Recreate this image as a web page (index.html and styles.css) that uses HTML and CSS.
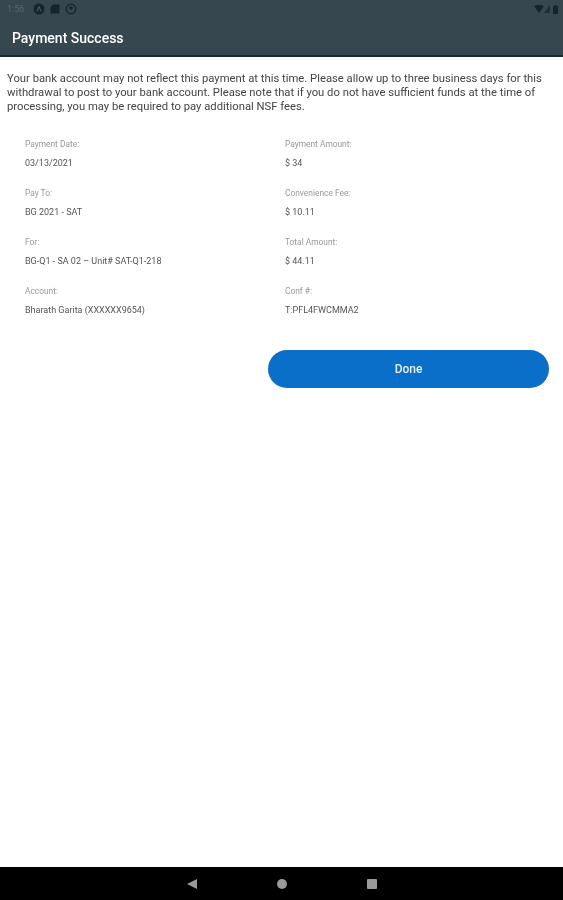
FILE: index.html
```html
<!DOCTYPE html>
<html lang="en">
<head>
    <meta charset="UTF-8">
    <meta name="viewport" content="width=device-width, initial-scale=1.0">
    <title>Payment Success</title>
    <link rel="stylesheet" href="styles.css">
</head>
<body>
    <div class="screen">
        <header class="app-header">
            <div class="status-bar">
                <div class="status-left">
                    <span class="clock">1:56</span>
                    <svg class="status-icon" viewBox="0 0 12 12"><circle cx="6" cy="6" r="5.5" fill="#16242c"/><path d="M4 8.5 6 3.5l2 5" fill="none" stroke="#4d5f68" stroke-width="1"/></svg>
                    <svg class="status-icon" viewBox="0 0 12 12"><path d="M1.500 4 4 1.500h6.500v9h-9z" fill="#16242c"/></svg>
                    <svg class="status-icon" viewBox="0 0 12 12"><circle cx="6" cy="6" r="4.800" fill="none" stroke="#16242c" stroke-width="1.300"/><circle cx="6" cy="5" r="1.800" fill="#16242c"/></svg>
                </div>
                <div class="status-right">
                    <svg class="wifi" viewBox="0 0 10 8"><path d="M0 1.200Q5-1.200 10 1.200L5 8z" fill="#16242c"/></svg>
                    <svg class="signal" viewBox="0 0 6 8"><path d="M6 0v8H0z" fill="#16242c" opacity=".7"/></svg>
                    <svg class="battery" viewBox="0 0 5 9"><path d="M1.500 0h2v1H5v8H0V1h1.500z" fill="#16242c"/></svg>
                </div>
            </div>
            <h1 class="page-title">Payment Success</h1>
        </header>

        <main class="content">
            <p class="notice">Your bank account may not reflect this payment at this time. Please allow up to three business days for this withdrawal to post to your bank account. Please note that if you do not have sufficient funds at the time of processing, you may be required to pay additional NSF fees.</p>

            <div class="details">
                <div class="detail">
                    <div class="detail-label">Payment Date:</div>
                    <div class="detail-value">03/13/2021</div>
                </div>
                <div class="detail">
                    <div class="detail-label">Payment Amount:</div>
                    <div class="detail-value">$ 34</div>
                </div>
                <div class="detail">
                    <div class="detail-label">Pay To:</div>
                    <div class="detail-value">BG 2021 - SAT</div>
                </div>
                <div class="detail">
                    <div class="detail-label">Convenience Fee:</div>
                    <div class="detail-value">$ 10.11</div>
                </div>
                <div class="detail">
                    <div class="detail-label">For:</div>
                    <div class="detail-value">BG-Q1 - SA 02 – Unit# SAT-Q1-218</div>
                </div>
                <div class="detail">
                    <div class="detail-label">Total Amount:</div>
                    <div class="detail-value">$ 44.11</div>
                </div>
                <div class="detail">
                    <div class="detail-label">Account:</div>
                    <div class="detail-value">Bharath Garita (XXXXXX9654)</div>
                </div>
                <div class="detail">
                    <div class="detail-label">Conf #:</div>
                    <div class="detail-value">T:PFL4FWCMMA2</div>
                </div>
            </div>

            <div class="actions">
                <button class="done-button" type="button">Done</button>
            </div>
        </main>

        <nav class="nav-bar">
            <span class="nav-back"></span>
            <span class="nav-home"></span>
            <span class="nav-recent"></span>
        </nav>
    </div>
</body>
</html>
```

FILE: styles.css
```css
body {
    font-family: Roboto, "Liberation Sans", sans-serif;
    background-color: #fff;
    margin: 0;
    padding: 0;
}

/* the source screenshot is a soft, upscaled capture */
.screen {
    display: flex;
    flex-direction: column;
    height: 900px;
    filter: blur(0.6px);
}

.app-header {
    height: 55px;
    background-color: #37474f;
    border-bottom: 2px solid #1c2a31;
    flex-shrink: 0;
}

.status-bar {
    display: flex;
    justify-content: space-between;
    align-items: center;
    height: 18px;
    padding: 0 5px 0 7px;
}

.status-left,
.status-right {
    display: flex;
    align-items: center;
}

.clock {
    font-size: 9px;
    color: #55666f;
    margin-right: 9px;
}

.status-icon {
    width: 12px;
    height: 12px;
    margin-right: 4px;
}

.wifi {
    width: 10px;
    height: 8px;
}

.signal {
    width: 6px;
    height: 8px;
    margin-right: 3px;
}

.battery {
    width: 5px;
    height: 9px;
}

.page-title {
    margin: 0;
    padding: 5px 12px 0;
    font-size: 14px;
    font-weight: 500;
    line-height: 31px;
    color: #fff;
}

.content {
    flex: 1;
    padding: 15px 14px 0 7px;
}

.notice {
    margin: 0;
    font-size: 11.27px;
    line-height: 14px;
    color: #444;
}

.details {
    display: grid;
    grid-template-columns: 260px 1fr;
    grid-auto-rows: 49px;
    margin-top: 25px;
    padding-left: 18px;
}

.detail-label {
    font-size: 8.4px;
    line-height: 10px;
    color: #999;
}

.detail-value {
    margin-top: 9px;
    font-size: 9px;
    line-height: 10px;
    color: #555;
}

.actions {
    display: flex;
    justify-content: flex-end;
    margin-top: 15px;
}

.done-button {
    width: 281px;
    height: 38px;
    border: none;
    border-radius: 19px;
    background-color: #0a6fc9;
    color: #e6f0fa;
    font-family: Roboto, "Liberation Sans", sans-serif;
    font-size: 12px;
    font-weight: 500;
}

.nav-bar {
    display: flex;
    justify-content: center;
    align-items: center;
    gap: 80px;
    height: 33px;
    background-color: #000;
    flex-shrink: 0;
}

.nav-back {
    width: 0;
    height: 0;
    border-top: 5px solid transparent;
    border-bottom: 5px solid transparent;
    border-right: 10px solid #9a9a9a;
}

.nav-home {
    width: 10px;
    height: 10px;
    border-radius: 50%;
    background-color: #9a9a9a;
}

.nav-recent {
    width: 10px;
    height: 10px;
    border-radius: 1px;
    background-color: #9a9a9a;
}
```
